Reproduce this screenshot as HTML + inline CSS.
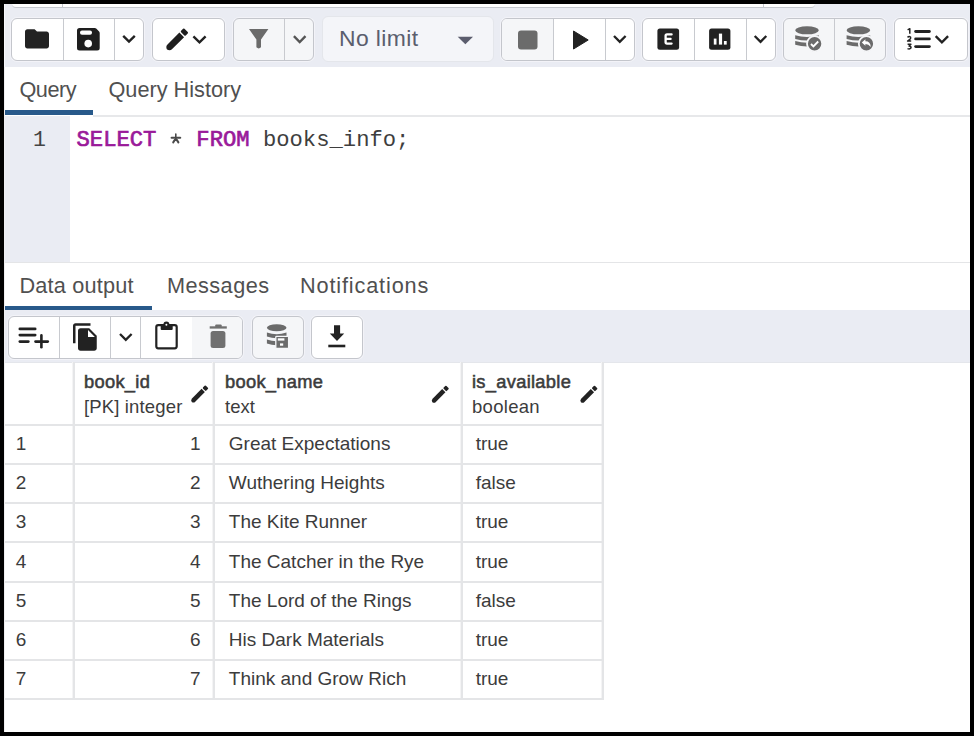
<!DOCTYPE html>
<html><head><meta charset="utf-8">
<style>
*{box-sizing:border-box;margin:0;padding:0}
html,body{width:974px;height:736px;overflow:hidden;background:#000}
body{position:relative;font-family:"Liberation Sans",sans-serif;color:#222}
.a{position:absolute}
.t{position:absolute;line-height:1;white-space:pre}
.grp{position:absolute;border:1px solid #c4c6cc;border-radius:6px;background:#fff;overflow:hidden;box-shadow:0 0 0 1px rgba(248,249,252,0.6)}
.grp .sep{position:absolute;top:0;bottom:0;width:1px;background:#c8cacf}
.dis{background:#f5f6f8}
.hl{position:absolute;background:#e4e5e7}
</style></head><body>
<div class="a" style="left:4px;top:4px;width:966px;height:728px;background:#fff"></div>
<div class="a" style="left:4px;top:4px;width:966px;height:63px;background:#eaecf3"></div>
<div class="a" style="left:12px;top:4px;width:803px;height:4px;background:#fff;border-bottom:1px solid #c4c7ce;border-radius:0 0 5px 5px"></div>
<div class="a" style="left:62px;top:4px;width:1px;height:4px;background:#c4c7ce"></div><div class="a" style="left:763px;top:4px;width:1px;height:4px;background:#c4c7ce"></div>
<div class="a" style="left:4px;top:4px;width:1px;height:63px;background:#f6f7fa"></div>


<div class="grp" style="left:11px;top:18px;width:133px;height:43px"><div class="sep" style="left:51px"></div><div class="sep" style="left:102px"></div></div>
<div class="grp" style="left:152px;top:18px;width:73px;height:43px"></div>
<div class="grp dis" style="left:233px;top:18px;width:81px;height:43px"><div class="sep" style="left:50px"></div></div>
<div class="grp" style="left:322px;top:16px;width:172px;height:46px;background:#f4f5f9;border-color:#e4e6eb;box-shadow:none"></div>
<div class="grp" style="left:501px;top:18px;width:134px;height:43px"><div class="a dis" style="left:0;top:0;width:51px;height:41px"></div><div class="sep" style="left:51px"></div><div class="sep" style="left:103px"></div></div>
<div class="grp" style="left:642px;top:18px;width:134px;height:43px"><div class="sep" style="left:51px"></div><div class="sep" style="left:103px"></div></div>
<div class="grp dis" style="left:783px;top:18px;width:103px;height:43px"><div class="sep" style="left:50px"></div></div>
<div class="grp" style="left:894px;top:18px;width:74px;height:43px"></div>

<div class="t" style="left:339.00px;top:26.61px;font-size:22.9px;color:#5a5e6e;font-weight:normal;letter-spacing:0.4px;font-family:'Liberation Sans',sans-serif;">No limit</div>
<div class="t" style="left:19.50px;top:78.73px;font-size:21.7px;color:#505050;font-weight:normal;letter-spacing:-0.5px;font-family:'Liberation Sans',sans-serif;">Query</div>
<div class="t" style="left:108.50px;top:78.73px;font-size:21.7px;color:#505050;font-weight:normal;letter-spacing:0px;font-family:'Liberation Sans',sans-serif;">Query History</div>
<div class="a" style="left:4px;top:110px;width:89px;height:5px;background:#28598a"></div>
<div class="hl" style="left:93px;top:115px;width:877px;height:2px;background:#e7e8ea"></div>
<div class="a" style="left:4px;top:116px;width:66px;height:146px;background:#eaecf3"></div>
<div class="t" style="left:33.00px;top:130.23px;font-size:21.5px;color:#444;font-weight:normal;letter-spacing:0px;font-family:'Liberation Mono',monospace;">1</div>
<div class="t" style="left:76.50px;top:129.69px;font-size:22.2px;color:#3e3e3e;font-weight:normal;letter-spacing:0px;font-family:'Liberation Mono',monospace;"><span style="color:#9a1a9a;-webkit-text-stroke:0.7px #9a1a9a">SELECT</span>   <span style="color:#9a1a9a;-webkit-text-stroke:0.7px #9a1a9a">FROM</span> books_info;</div>
<svg class="a" style="left:165px;top:128px" width="20" height="20" viewBox="165 128 20 20"><g stroke="#4a4a4a" stroke-linecap="round" fill="none"><path stroke-width="1.6" d="M175.8,134 V137.6"/><path stroke-width="2.1" d="M171.6,137.8 H180.2"/><path stroke-width="2" d="M175.8,138.4 L173.2,142.4 M175.8,138.4 L178.4,142.4"/></g></svg>
<div class="hl" style="left:4px;top:262px;width:966px;height:1px"></div>
<div class="t" style="left:19.50px;top:275.13px;font-size:21.7px;color:#505050;font-weight:normal;letter-spacing:0.2px;font-family:'Liberation Sans',sans-serif;">Data output</div>
<div class="t" style="left:167.00px;top:275.13px;font-size:21.7px;color:#505050;font-weight:normal;letter-spacing:0.45px;font-family:'Liberation Sans',sans-serif;">Messages</div>
<div class="t" style="left:300.00px;top:275.13px;font-size:21.7px;color:#505050;font-weight:normal;letter-spacing:0.85px;font-family:'Liberation Sans',sans-serif;">Notifications</div>
<div class="a" style="left:4px;top:306px;width:148px;height:4px;background:#28598a"></div>

<div class="a" style="left:4px;top:310px;width:966px;height:52px;background:#eaecf3"></div>
<div class="grp" style="left:8px;top:316px;width:235px;height:43px"><div class="sep" style="left:50px"></div><div class="sep" style="left:101px"></div><div class="sep" style="left:131px"></div><div class="a dis" style="left:183px;top:0;width:52px;height:41px"></div></div>
<div class="grp dis" style="left:252px;top:316px;width:52px;height:43px"></div>
<div class="grp" style="left:311px;top:316px;width:52px;height:43px"></div>

<div class="hl" style="left:4px;top:362px;width:966px;height:1px;background:#e4e6eb"></div>
<div class="hl" style="left:73px;top:362px;width:2px;height:338px;background:#e4e5e7;box-shadow:-1px 0 0 #f4f4f5"></div>
<div class="hl" style="left:213px;top:362px;width:2px;height:338px;background:#e4e5e7;box-shadow:-1px 0 0 #f4f4f5"></div>
<div class="hl" style="left:461px;top:362px;width:2px;height:338px;background:#e4e5e7;box-shadow:-1px 0 0 #f4f4f5"></div>
<div class="hl" style="left:602px;top:362px;width:2px;height:338px;background:#e4e5e7;box-shadow:-1px 0 0 #f4f4f5"></div>
<div class="hl" style="left:4px;top:424px;width:599px;height:2px"></div>
<div class="hl" style="left:4px;top:463px;width:599px;height:2px"></div>
<div class="hl" style="left:4px;top:502px;width:599px;height:2px"></div>
<div class="hl" style="left:4px;top:541px;width:599px;height:2px"></div>
<div class="hl" style="left:4px;top:581px;width:599px;height:2px"></div>
<div class="hl" style="left:4px;top:620px;width:599px;height:2px"></div>
<div class="hl" style="left:4px;top:659px;width:599px;height:2px"></div>
<div class="hl" style="left:4px;top:698px;width:599px;height:2px"></div>
<div class="a" style="left:4px;top:67px;width:1px;height:665px;background:#efeff1"></div>
<div class="t" style="left:84.00px;top:372.81px;font-size:18.3px;color:#3c3c3c;font-weight:normal;letter-spacing:0.3px;font-family:'Liberation Sans',sans-serif;-webkit-text-stroke:0.55px #3c3c3c">book_id</div>
<div class="t" style="left:84.00px;top:398.04px;font-size:18.5px;color:#3c3c3c;font-weight:normal;letter-spacing:0.15px;font-family:'Liberation Sans',sans-serif;">[PK] integer</div>
<div class="t" style="left:225.00px;top:372.81px;font-size:18.3px;color:#3c3c3c;font-weight:normal;letter-spacing:0.3px;font-family:'Liberation Sans',sans-serif;-webkit-text-stroke:0.55px #3c3c3c">book_name</div>
<div class="t" style="left:225.00px;top:398.04px;font-size:18.5px;color:#3c3c3c;font-weight:normal;letter-spacing:0px;font-family:'Liberation Sans',sans-serif;">text</div>
<div class="t" style="left:472.00px;top:372.81px;font-size:18.3px;color:#3c3c3c;font-weight:normal;letter-spacing:0.3px;font-family:'Liberation Sans',sans-serif;-webkit-text-stroke:0.55px #3c3c3c">is_available</div>
<div class="t" style="left:472.00px;top:398.04px;font-size:18.5px;color:#3c3c3c;font-weight:normal;letter-spacing:0.3px;font-family:'Liberation Sans',sans-serif;">boolean</div>
<div class="t" style="left:15.70px;top:434.21px;font-size:19px;color:#3c3c3c;font-weight:normal;letter-spacing:0px;font-family:'Liberation Sans',sans-serif;">1</div>
<div class="t" style="left:100.50px;top:434.21px;font-size:19px;color:#3c3c3c;font-weight:normal;letter-spacing:0px;font-family:'Liberation Sans',sans-serif;width:100px;text-align:right">1</div>
<div class="t" style="left:228.80px;top:434.21px;font-size:19px;color:#3c3c3c;font-weight:normal;letter-spacing:0px;font-family:'Liberation Sans',sans-serif;">Great Expectations</div>
<div class="t" style="left:475.70px;top:434.21px;font-size:19px;color:#3c3c3c;font-weight:normal;letter-spacing:0px;font-family:'Liberation Sans',sans-serif;">true</div>
<div class="t" style="left:15.70px;top:473.35px;font-size:19px;color:#3c3c3c;font-weight:normal;letter-spacing:0px;font-family:'Liberation Sans',sans-serif;">2</div>
<div class="t" style="left:100.50px;top:473.35px;font-size:19px;color:#3c3c3c;font-weight:normal;letter-spacing:0px;font-family:'Liberation Sans',sans-serif;width:100px;text-align:right">2</div>
<div class="t" style="left:228.80px;top:473.35px;font-size:19px;color:#3c3c3c;font-weight:normal;letter-spacing:0px;font-family:'Liberation Sans',sans-serif;">Wuthering Heights</div>
<div class="t" style="left:475.70px;top:473.35px;font-size:19px;color:#3c3c3c;font-weight:normal;letter-spacing:0px;font-family:'Liberation Sans',sans-serif;">false</div>
<div class="t" style="left:15.70px;top:512.49px;font-size:19px;color:#3c3c3c;font-weight:normal;letter-spacing:0px;font-family:'Liberation Sans',sans-serif;">3</div>
<div class="t" style="left:100.50px;top:512.49px;font-size:19px;color:#3c3c3c;font-weight:normal;letter-spacing:0px;font-family:'Liberation Sans',sans-serif;width:100px;text-align:right">3</div>
<div class="t" style="left:228.80px;top:512.49px;font-size:19px;color:#3c3c3c;font-weight:normal;letter-spacing:0px;font-family:'Liberation Sans',sans-serif;">The Kite Runner</div>
<div class="t" style="left:475.70px;top:512.49px;font-size:19px;color:#3c3c3c;font-weight:normal;letter-spacing:0px;font-family:'Liberation Sans',sans-serif;">true</div>
<div class="t" style="left:15.70px;top:551.63px;font-size:19px;color:#3c3c3c;font-weight:normal;letter-spacing:0px;font-family:'Liberation Sans',sans-serif;">4</div>
<div class="t" style="left:100.50px;top:551.63px;font-size:19px;color:#3c3c3c;font-weight:normal;letter-spacing:0px;font-family:'Liberation Sans',sans-serif;width:100px;text-align:right">4</div>
<div class="t" style="left:228.80px;top:551.63px;font-size:19px;color:#3c3c3c;font-weight:normal;letter-spacing:0px;font-family:'Liberation Sans',sans-serif;">The Catcher in the Rye</div>
<div class="t" style="left:475.70px;top:551.63px;font-size:19px;color:#3c3c3c;font-weight:normal;letter-spacing:0px;font-family:'Liberation Sans',sans-serif;">true</div>
<div class="t" style="left:15.70px;top:590.77px;font-size:19px;color:#3c3c3c;font-weight:normal;letter-spacing:0px;font-family:'Liberation Sans',sans-serif;">5</div>
<div class="t" style="left:100.50px;top:590.77px;font-size:19px;color:#3c3c3c;font-weight:normal;letter-spacing:0px;font-family:'Liberation Sans',sans-serif;width:100px;text-align:right">5</div>
<div class="t" style="left:228.80px;top:590.77px;font-size:19px;color:#3c3c3c;font-weight:normal;letter-spacing:0px;font-family:'Liberation Sans',sans-serif;">The Lord of the Rings</div>
<div class="t" style="left:475.70px;top:590.77px;font-size:19px;color:#3c3c3c;font-weight:normal;letter-spacing:0px;font-family:'Liberation Sans',sans-serif;">false</div>
<div class="t" style="left:15.70px;top:629.91px;font-size:19px;color:#3c3c3c;font-weight:normal;letter-spacing:0px;font-family:'Liberation Sans',sans-serif;">6</div>
<div class="t" style="left:100.50px;top:629.91px;font-size:19px;color:#3c3c3c;font-weight:normal;letter-spacing:0px;font-family:'Liberation Sans',sans-serif;width:100px;text-align:right">6</div>
<div class="t" style="left:228.80px;top:629.91px;font-size:19px;color:#3c3c3c;font-weight:normal;letter-spacing:0px;font-family:'Liberation Sans',sans-serif;">His Dark Materials</div>
<div class="t" style="left:475.70px;top:629.91px;font-size:19px;color:#3c3c3c;font-weight:normal;letter-spacing:0px;font-family:'Liberation Sans',sans-serif;">true</div>
<div class="t" style="left:15.70px;top:669.05px;font-size:19px;color:#3c3c3c;font-weight:normal;letter-spacing:0px;font-family:'Liberation Sans',sans-serif;">7</div>
<div class="t" style="left:100.50px;top:669.05px;font-size:19px;color:#3c3c3c;font-weight:normal;letter-spacing:0px;font-family:'Liberation Sans',sans-serif;width:100px;text-align:right">7</div>
<div class="t" style="left:228.80px;top:669.05px;font-size:19px;color:#3c3c3c;font-weight:normal;letter-spacing:0px;font-family:'Liberation Sans',sans-serif;">Think and Grow Rich</div>
<div class="t" style="left:475.70px;top:669.05px;font-size:19px;color:#3c3c3c;font-weight:normal;letter-spacing:0px;font-family:'Liberation Sans',sans-serif;">true</div>
<svg class="a" style="left:0;top:0" width="974" height="736" viewBox="0 0 974 736">
<!-- folder -->
<path transform="translate(22.6,24.4) scale(1.2)" fill="#222" d="M10 4H4c-1.1 0-1.99.9-1.99 2L2 18c0 1.1.9 2 2 2h16c1.1 0 2-.9 2-2V8c0-1.1-.9-2-2-2h-8l-2-2z"/>
<!-- save -->
<path fill="#1e1e1e" d="M77,30.5 Q77,28 79.5,28 H94.8 Q95.6,28 96.2,28.6 L99.1,31.5 Q99.7,32.1 99.7,33 V48 Q99.7,50.5 97.2,50.5 H79.5 Q77,50.5 77,48 Z"/>
<rect x="80" y="30.6" width="12" height="4.2" rx="2" fill="#fff"/>
<circle cx="88.2" cy="43.6" r="3.8" fill="#fff"/>
<!-- chevrons -->
<g fill="none" stroke-width="2.35" stroke-linejoin="miter" stroke-linecap="butt">
<polyline stroke="#222" points="123.2,35.8 129,41.6 134.8,35.8"/>
<polyline stroke="#222" points="193.4,36.3 199.5,42.4 205.6,36.3"/>
<polyline stroke="#555" points="293.9,36.2 299.7,42 305.5,36.2"/>
<polyline stroke="#222" points="614,36 619.8,41.8 625.6,36"/>
<polyline stroke="#222" points="754.7,36 760.5,41.8 766.3,36"/>
<polyline stroke="#222" points="935.7,36.2 941.9,42.4 948.1,36.2"/>
<polyline stroke="#222" points="120,334 125.8,339.8 131.6,334"/>
</g>
<!-- toolbar pencil -->
<g transform="translate(177.2,39.4) rotate(45)" fill="#1e1e1e">
<path d="M-3.3,-6.4 H3.3 V10.4 Q3.3,13.4 0,14.4 Q-3.3,13.4 -3.3,10.4 Z"/>
<rect x="-3.3" y="-12.6" width="6.6" height="4.8" rx="1"/>
</g>
<!-- filter -->
<path fill="#6b6b6b" d="M249,29 H268.4 L261,39.6 V47.3 Q258.7,49.6 256.4,47.3 V39.6 Z"/>
<!-- no limit caret -->
<path fill="#5b5d6e" d="M457.7,36.8 H473 L465.35,44.2 Z"/>
<!-- stop -->
<rect x="518" y="30.5" width="19.5" height="19" rx="3" fill="#6b6b6b"/>
<!-- play -->
<path fill="#222" stroke="#222" stroke-width="1" stroke-linejoin="round" d="M573.5,31 L588.2,40 L573.5,49 Z"/>
<!-- E -->
<rect x="657.4" y="28.5" width="21.7" height="21.2" rx="2.5" fill="#222"/>
<path fill="none" stroke="#fff" stroke-width="2.3" stroke-linejoin="round" stroke-linecap="round" d="M671.6,34.4 H667 Q665.6,34.4 665.6,35.8 V42.3 Q665.6,43.6 667,43.6 H671.6 M666,38.9 H670.6"/>
<!-- chart -->
<rect x="709.1" y="28.5" width="21.3" height="21.2" rx="2.5" fill="#222"/>
<rect x="713.8" y="38.6" width="2.7" height="6" fill="#fff"/>
<rect x="718.9" y="33.6" width="3.2" height="11" fill="#fff"/>
<rect x="723.9" y="41" width="2.8" height="3.6" fill="#fff"/>
<!-- db check -->
<g fill="#6b6b6b">
<ellipse cx="807" cy="30.3" rx="11.8" ry="4"/>
<path d="M795.2,35.3 Q807.0,38.5 818.8,35.3 V39 Q807.0,42.2 795.2,39 Z"/>
<path d="M795.2,41.1 Q807.0,44.3 818.8,41.1 V44.8 Q807.0,48 795.2,44.8 Z"/>
<circle cx="814.6" cy="43.8" r="7.6" stroke="#f5f6f8" stroke-width="1.8"/>
</g>
<polyline fill="none" stroke="#fff" stroke-width="1.9" points="811,44 813.4,46.4 818.2,41.5"/>
<!-- db undo -->
<g fill="#6b6b6b">
<ellipse cx="858.4" cy="30.3" rx="11.8" ry="4"/>
<path d="M846.6,35.3 Q858.4,38.5 870.2,35.3 V39 Q858.4,42.2 846.6,39 Z"/>
<path d="M846.6,41.1 Q858.4,44.3 870.2,41.1 V44.8 Q858.4,48 846.6,44.8 Z"/>
<circle cx="866.4" cy="43.8" r="7.6" stroke="#f5f6f8" stroke-width="1.8"/>
</g>
<path fill="#fff" d="M861.8,42.4 L865.4,39.2 V41.3 Q870.4,41.2 870.8,47 Q868.6,44 865.4,44 V45.8 Z"/>
<!-- list -->
<g stroke="#222" stroke-width="2.8" stroke-linecap="round">
<line x1="915.6" y1="31.5" x2="929.4" y2="31.5"/>
<line x1="915.6" y1="38.9" x2="929.4" y2="38.9"/>
<line x1="915.6" y1="46.6" x2="929.4" y2="46.6"/>
</g>
<g fill="none" stroke="#222" stroke-width="1.5" stroke-linejoin="round">
<path d="M907.6,29.8 L909.8,28.7 V33.8"/>
<path d="M907.5,37.4 Q909,36 910.5,37 Q911.2,38.2 909.8,39.4 L907.6,41 H911.2"/>
<path d="M907.6,44.3 H910.9 L909.1,46.1 Q911.2,46.3 911,47.9 Q909.8,49.6 907.5,48.6"/>
</g>
<!-- add row -->
<g stroke="#222" stroke-width="2.6" stroke-linecap="round">
<line x1="19.8" y1="328.9" x2="35.2" y2="328.9"/>
<line x1="19.8" y1="335.1" x2="35.2" y2="335.1"/>
<line x1="19.8" y1="341.6" x2="28.4" y2="341.6"/>
<line x1="35.5" y1="341.6" x2="47.8" y2="341.6"/>
<line x1="41.4" y1="335.4" x2="41.4" y2="347.3"/>
</g>
<!-- copy -->
<path transform="translate(70.5,321.9) scale(1.25)" fill="#222" d="M16 1H4c-1.1 0-2 .9-2 2v14h2V3h12V1zm-1 4l6 6v10c0 1.1-.9 2-2 2H7.99C6.89 23 6 22.1 6 21l.01-14c0-1.1.89-2 1.99-2h7zm-1 7h5.5L14 6.5V12z"/>
<!-- clipboard -->
<rect x="156.3" y="325.1" width="20.4" height="23.2" rx="2" fill="none" stroke="#222" stroke-width="2.2"/>
<rect x="160.7" y="324.6" width="12" height="5.4" rx="1" fill="#222"/>
<circle cx="166.4" cy="324.6" r="3" fill="#222"/>
<circle cx="166.4" cy="324.8" r="1" fill="#fff"/>
<!-- trash -->
<g fill="#707070">
<rect x="209.7" y="326.3" width="17.1" height="2.3"/>
<rect x="215.2" y="324.4" width="6.5" height="3" rx="1"/>
<rect x="210.6" y="331" width="14.8" height="17" rx="2.5"/>
</g>
<!-- db save -->
<g fill="#6b6b6b">
<ellipse cx="276.7" cy="327.8" rx="9.8" ry="3.5"/>
<path d="M266.9,332.6 Q276.7,335.8 286.5,332.6 V336.6 Q276.7,339.8 266.9,336.6 Z"/>
<path d="M266.9,339.6 Q276.7,342.8 286.5,339.6 V343.6 Q276.7,346.8 266.9,343.6 Z"/>
<rect x="275.8" y="336.3" width="12.8" height="12.2" rx="0.8" stroke="#f5f6f8" stroke-width="1.3"/>
</g>
<rect x="277.8" y="338.3" width="6.6" height="2.3" fill="#fff"/>
<rect x="280" y="343.4" width="3.2" height="2.3" fill="#fff"/>
<!-- download -->
<path fill="#222" d="M334,325.2 H340.1 V333.4 H344.2 L337,341.1 L329.8,333.4 H334 Z"/>
<rect x="328.3" y="344.7" width="17" height="2.6" fill="#222"/>
<!-- header pencils -->
<g fill="#222">
<g transform="translate(199.4,394.3) rotate(45)"><path d="M-2.3,-5.4 H2.3 V8.2 Q2.3,10.4 0,10.8 Q-2.3,10.4 -2.3,8.2 Z"/><rect x="-2.3" y="-10.6" width="4.6" height="4" rx="0.9"/></g>
<g transform="translate(440,394.5) rotate(45)"><path d="M-2.3,-5.4 H2.3 V8.2 Q2.3,10.4 0,10.8 Q-2.3,10.4 -2.3,8.2 Z"/><rect x="-2.3" y="-10.6" width="4.6" height="4" rx="0.9"/></g>
<g transform="translate(588.6,394.5) rotate(45)"><path d="M-2.3,-5.4 H2.3 V8.2 Q2.3,10.4 0,10.8 Q-2.3,10.4 -2.3,8.2 Z"/><rect x="-2.3" y="-10.6" width="4.6" height="4" rx="0.9"/></g>
</g>
</svg>

</body></html>
